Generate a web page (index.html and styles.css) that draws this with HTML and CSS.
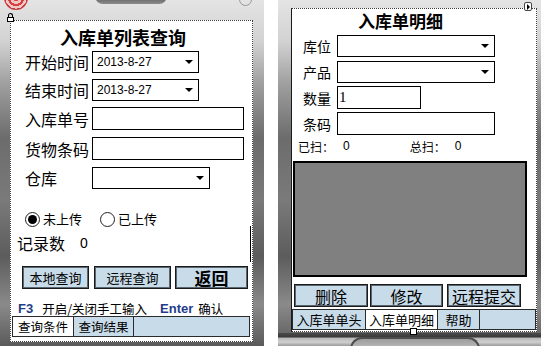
FILE: index.html
```html
<!DOCTYPE html>
<html lang="zh">
<head>
<meta charset="utf-8">
<title>入库单</title>
<link rel="stylesheet" href="styles.css">
</head>
<body>
<div class="page">
  <div class="device dev-left">
    <span class="logo"></span>
    <span class="topbar"></span>
    <span class="topcircle"></span>
    <span class="lock"><i class="shackle"></i><i class="lockbody"></i></span>
    <span class="sbar"></span>
    <div class="screen scr-left">
      <div class="title-l">入库单列表查询</div>
      <div class="frow r1"><span class="lbl">开始时间</span><div class="sel w107"><span class="val">2013-8-27</span><i class="arr"></i></div></div>
      <div class="frow r2"><span class="lbl">结束时间</span><div class="sel w107"><span class="val">2013-8-27</span><i class="arr"></i></div></div>
      <div class="frow r3"><span class="lbl">入库单号</span><div class="inp w152"></div></div>
      <div class="frow r4"><span class="lbl">货物条码</span><div class="inp w152"></div></div>
      <div class="frow r5"><span class="lbl">仓库</span><div class="sel w118"><span class="val"></span><i class="arr"></i></div></div>
      <div class="radios">
        <span class="radio on"></span><span class="rtext">未上传</span>
        <span class="radio second"></span><span class="rtext">已上传</span>
      </div>
      <div class="count"><span>记录数</span><span class="num">0</span></div>
      <div class="btns-l">
        <div class="btn b1">本地查询</div>
        <div class="btn b2">远程查询</div>
        <div class="btn b3">返回</div>
      </div>
      <div class="hint"><b class="key">F3</b><span class="ht">开启/关闭手工输入</span><b class="key k2">Enter</b><span class="ht">确认</span></div>
      <div class="tabs tabs-l">
        <div class="tab active t61">查询条件</div>
        <div class="tab t60">查询结果</div>
        <div class="tab rest"></div>
      </div>
    </div>
  </div>

  <div class="device dev-right">
    <span class="navbox"><i class="navarr"></i></span>
    <span class="handle"></span>
    <div class="screen scr-right">
      <div class="title-r">入库单明细</div>
      <div class="frow s1"><span class="lbl2">库位</span><div class="sel w158"><span class="val"></span><i class="arr"></i></div></div>
      <div class="frow s2"><span class="lbl2">产品</span><div class="sel w158"><span class="val"></span><i class="arr"></i></div></div>
      <div class="frow s3"><span class="lbl2">数量</span><div class="inp w84"><span class="qty">1</span></div></div>
      <div class="frow s4"><span class="lbl2">条码</span><div class="inp w158"></div></div>
      <div class="scan"><span>已扫：</span><span class="sn">0</span><span class="tot">总扫：</span><span class="sn">0</span></div>
      <div class="grid-box"></div>
      <div class="btns-r">
        <div class="btn c1">删除</div>
        <div class="btn c2">修改</div>
        <div class="btn c3">远程提交</div>
      </div>
      <div class="tabs tabs-r">
        <div class="tab u1">入库单单头</div>
        <div class="tab active u2">入库单明细</div>
        <div class="tab u3">帮助</div>
        <div class="tab rest"></div>
      </div>
    </div>
    <div class="bottom-frame"><span class="hwbtn"></span></div>
  </div>
</div>
</body>
</html>
```

FILE: styles.css
```css
* { box-sizing: border-box; }
html, body { margin: 0; padding: 0; }
body {
  width: 541px;
  height: 346px;
  overflow: hidden;
  background: #ffffff;
  font-family: "Noto Sans CJK SC", "Liberation Sans", sans-serif;
  color: #000;
}
.page {
  display: flex;
  width: 541px;
  height: 346px;
}
.device {
  position: relative;
  height: 346px;
  background: linear-gradient(to bottom, #e4e4e4 0, #d2d2d2 12%, #a0a0a0 24%, #6c6c6c 40%, #7a7a7a 58%, #5c5c5c 74%, #8a8a8a 88%, #5a5a5a 100%);
}
.dev-left {
  width: 264px;
  margin-right: 14px;
  padding: 20px 0 0 10px;
}
.dev-right {
  width: 263px;
  padding: 8px 0 0 13px;
}
.screen {
  background: #fff;
  display: flex;
  flex-direction: column;
  border: 1px dotted #3c3c3c;
}
.scr-left { width: 243px; height: 322px; }
.scr-right { width: 246px; height: 324px; border-left: 1px solid #1a1a1a; }

/* decorations */
.logo {
  position: absolute;
  left: 4px; top: -14px;
  width: 24px; height: 24px;
  border-radius: 50%;
  background: radial-gradient(circle, #e04848 0 18%, #f6c4c4 18% 34%, #d84040 34% 48%, #f2c6c6 48% 62%, #c83838 62% 74%, #e0d0d0 74% 100%);
}
.topbar {
  position: absolute;
  left: 95px; top: -4px;
  width: 72px; height: 8px;
  border-radius: 0 0 10px 10px;
  background: linear-gradient(to bottom, #5a5a5a, #8a8a8a);
}
.topcircle {
  position: absolute;
  left: 239px; top: -7px;
  width: 13px; height: 13px;
  border-radius: 50%;
  border: 1px solid #9a9a9a;
}
.lock {
  position: absolute;
  left: 6px; top: 13px;
  width: 8px; height: 9px;
  display: flex;
  flex-direction: column;
  align-items: center;
}
.shackle {
  width: 5px; height: 4px;
  border: 1px solid #000;
  border-bottom: none;
  border-radius: 3px 3px 0 0;
}
.lockbody {
  width: 7px; height: 5px;
  background: #fff;
  border: 1px solid #000;
}
.sbar {
  position: absolute;
  left: 250px; top: 226px;
  width: 1px; height: 36px;
  background: #000;
  z-index: 2;
}
.navbox {
  position: absolute;
  left: 246px; top: 2px;
  width: 8px; height: 9px;
  background: #fff;
  border: 1px solid #444;
  border-radius: 2px;
  display: flex;
  align-items: center;
  justify-content: center;
}
.navarr {
  width: 0; height: 0;
  border-left: 3px solid #000;
  border-top: 3px solid transparent;
  border-bottom: 3px solid transparent;
}
.handle {
  position: absolute;
  left: 132px; top: 328px;
  width: 7px; height: 7px;
  background: #fff;
  border: 1px solid #000;
  z-index: 2;
}
.bottom-frame {
  position: absolute;
  left: 0; right: 0; top: 333px; bottom: 0;
  background: linear-gradient(to bottom, #4a4a4a 0, #3a3a3a 30%, #b8b8b8 40%, #d0d0d0 70%, #9a9a9a 100%);
}
.hwbtn {
  position: absolute;
  left: 72px; top: 4px;
  width: 130px; height: 14px;
  border-radius: 12px 12px 0 0;
  border: 2px solid #4c4c4c;
  border-bottom: none;
  background: linear-gradient(to bottom, #9c9c9c, #c4c4c4);
}

/* left form */
.title-l {
  height: 29px;
  padding: 3px 0 0 49px;
  font-size: 18px;
  line-height: 26px;
  font-weight: bold;
  white-space: nowrap;
}
.frow {
  display: flex;
  align-items: center;
  padding-left: 14px;
}
.lbl {
  width: 67px;
  font-size: 16px;
  line-height: 22px;
  white-space: nowrap;
}
.r1 { margin-top: 1px; height: 22px; }
.r2 { margin-top: 6px; height: 22px; }
.r3 { margin-top: 6px; height: 23px; }
.r4 { margin-top: 7px; height: 23px; }
.r5 { margin-top: 7px; height: 22px; }

.sel, .inp {
  height: 100%;
  border: 1px solid #000;
  background: #fff;
  display: flex;
  align-items: center;
}
.sel { justify-content: space-between; padding: 0 5px 0 4px; }
.val {
  font-family: "Liberation Sans", Arial, sans-serif;
  font-size: 12px;
}
.arr {
  width: 0; height: 0;
  border-top: 4px solid #000;
  border-left: 4px solid transparent;
  border-right: 4px solid transparent;
}
.w107 { width: 107px; }
.w118 { width: 118px; }
.w152 { width: 152px; }
.w158 { width: 158px; }
.w84 { width: 84px; }

.radios {
  margin-top: 21px;
  height: 18px;
  display: flex;
  align-items: center;
  padding-left: 14px;
  font-size: 13px;
}
.radio {
  width: 15px; height: 15px;
  border-radius: 50%;
  border: 1px solid #222;
  background: #fff;
  display: flex;
  align-items: center;
  justify-content: center;
  margin-right: 3px;
}
.radio.on::after {
  content: "";
  width: 9px; height: 9px;
  border-radius: 50%;
  background: #000;
}
.radio.second { margin-left: 18px; }
.rtext { line-height: 18px; }

.count {
  margin-top: 5px;
  height: 20px;
  display: flex;
  align-items: center;
  padding-left: 6px;
  font-size: 16px;
}
.count .num {
  margin-left: 15px;
  font-family: "Liberation Sans", Arial, sans-serif;
  font-size: 14px;
}

.btns-l {
  margin-top: 13px;
  height: 23px;
  display: flex;
  padding-left: 11px;
}
.btn {
  height: 100%;
  background: #c8dbe9;
  border: 1px solid #1a1a1a;
  box-shadow: inset -1px -1px 0 #5a6670, inset 1px 1px 0 #5a6670;
  display: flex;
  align-items: center;
  justify-content: center;
  white-space: nowrap;
}
.b1 { width: 67px; font-size: 13px; }
.b2 { width: 77px; margin-left: 5px; font-size: 13px; }
.b3 { width: 73px; margin-left: 4px; font-size: 17px; font-weight: bold; }

.hint {
  margin-top: 11px;
  height: 16px;
  display: flex;
  align-items: center;
  padding-left: 7px;
  font-size: 12.5px;
  white-space: nowrap;
}
.key {
  font-family: "Liberation Sans", Arial, sans-serif;
  font-size: 13px;
  color: #1f3d8a;
  margin-right: 9px;
}
.key.k2 { margin-left: 13px; margin-right: 5px; }

.tabs {
  display: flex;
  height: 21px;
  border: 1px solid #2a2a2a;
  background: #c8dbe9;
}
.tabs-l { margin-left: 1px; width: 238px; }
.tab {
  height: 100%;
  display: flex;
  align-items: center;
  justify-content: center;
  font-size: 12.5px;
  border-right: 1px solid #2a2a2a;
  background: #c8dbe9;
  white-space: nowrap;
}
.tab.active { background: #fff; }
.tab.rest { flex: 1; border-right: none; }
.t61 { width: 61px; }
.t60 { width: 60px; }

/* right form */
.title-r {
  height: 23px;
  padding: 1px 0 0 66px;
  font-size: 17px;
  line-height: 22px;
  font-weight: bold;
  white-space: nowrap;
}
.lbl2 {
  width: 34px;
  font-size: 14px;
  white-space: nowrap;
}
.s1, .s2, .s3, .s4 { padding-left: 11px; }
.s1 { margin-top: 3px; height: 22px; }
.s2 { margin-top: 4px; height: 22px; }
.s3 { margin-top: 3px; height: 23px; }
.s4 { margin-top: 3px; height: 23px; }
.qty {
  font-family: "Liberation Serif", "Times New Roman", serif;
  font-size: 15px;
  color: #000;
  padding-left: 1px;
}
.scan {
  margin-top: 4px;
  height: 14px;
  display: flex;
  align-items: center;
  padding-left: 6px;
  font-size: 12px;
  white-space: nowrap;
}
.scan .sn {
  font-family: "Liberation Sans", Arial, sans-serif;
  margin-left: 9px;
}
.scan .tot { margin-left: 60px; }
.grid-box {
  margin: 8px 0 0 1px;
  width: 234px;
  height: 116px;
  background: #808080;
  border: 2px solid #000;
}
.btns-r {
  margin-top: 7px;
  height: 23px;
  display: flex;
  padding-left: 2px;
}
.c1 { width: 74px; font-size: 16px; }
.c2 { width: 73px; margin-left: 2px; font-size: 16px; }
.c3 { width: 74px; margin-left: 4px; font-size: 16px; }
.tabs-r { margin-top: 2px; width: 244px; }
.u1 { width: 73px; font-size: 13px; }
.u2 { width: 72px; font-size: 13px; }
.u3 { width: 42px; font-size: 13px; }
```
